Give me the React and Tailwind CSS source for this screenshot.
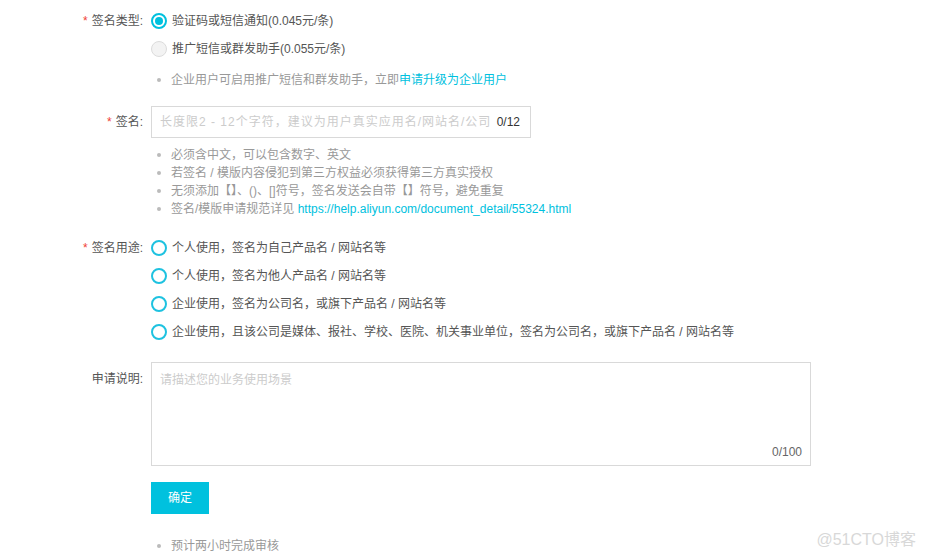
import React from 'react';

const font = { fontFamily: '"Liberation Sans", "Noto Sans CJK SC", sans-serif' };

const Radio = ({ state }) => {
  if (state === 'checked') {
    return (
      <span className="w-4 h-4 rounded-full border-2 border-[#00c1de] bg-white flex items-center justify-center shrink-0">
        <span className="w-2 h-2 rounded-full bg-[#00c1de]" />
      </span>
    );
  }
  if (state === 'disabled') {
    return <span className="w-4 h-4 rounded-full border border-[#dcdcdc] bg-[#f3f3f3] shrink-0" />;
  }
  return <span className="w-4 h-4 rounded-full border-2 border-[#1ec2e0] bg-white shrink-0" />;
};

const Label = ({ required, children, className = '' }) => (
  <div className={`w-[143px] shrink-0 text-right text-[#555] ${className}`}>
    {required && <span className="text-[#f04134] mr-1">*</span>}
    {children}
  </div>
);

const Bullet = ({ children }) => (
  <div className="flex items-center h-[18px] text-[#999]">
    <span className="w-[4px] h-[4px] rounded-full bg-[#bbb] ml-[6px] mr-[10px]" />
    <span>{children}</span>
  </div>
);

const RadioRow = ({ state, children }) => (
  <div className="flex items-center h-7 gap-[5px]">
    <Radio state={state} />
    <span className="text-[#555]">{children}</span>
  </div>
);

export default function App() {
  const usages = [
    '个人使用，签名为自己产品名 / 网站名等',
    '个人使用，签名为他人产品名 / 网站名等',
    '企业使用，签名为公司名，或旗下产品名 / 网站名等',
    '企业使用，且该公司是媒体、报社、学校、医院、机关事业单位，签名为公司名，或旗下产品名 / 网站名等',
  ];

  return (
    <div className="relative w-[926px] h-[559px] bg-white overflow-hidden text-[12px]" style={font}>
      <div className="pt-[7px]">
        {/* 签名类型 */}
        <div className="flex gap-2">
          <Label required className="leading-7">签名类型:</Label>
          <div>
            <RadioRow state="checked">验证码或短信通知(0.045元/条)</RadioRow>
            <RadioRow state="disabled">推广短信或群发助手(0.055元/条)</RadioRow>
            <div className="mt-2">
              <Bullet>
                企业用户可启用推广短信和群发助手，立即
                <span className="text-[#00c1de]">申请升级为企业用户</span>
              </Bullet>
            </div>
          </div>
        </div>

        {/* 签名 */}
        <div className="flex gap-2 mt-[17px]">
          <Label required className="leading-8">签名:</Label>
          <div>
            <div className="w-[380px] h-8 border border-[#d9d9d9] flex items-center pl-2 pr-[10px]">
              <span className="flex-1 text-[#ccc] tracking-[1px] whitespace-nowrap overflow-hidden">
                长度限2 - 12个字符，建议为用户真实应用名/网站名/公司名
              </span>
              <span className="text-[#333] ml-[6px]">0/12</span>
            </div>
            <div className="mt-2">
              <Bullet>必须含中文，可以包含数字、英文</Bullet>
              <Bullet>若签名 / 模版内容侵犯到第三方权益必须获得第三方真实授权</Bullet>
              <Bullet>无须添加【】、()、[]符号，签名发送会自带【】符号，避免重复</Bullet>
              <Bullet>
                签名/模版申请规范详见{' '}
                <span className="text-[#00c1de]">https://help.aliyun.com/document_detail/55324.html</span>
              </Bullet>
            </div>
          </div>
        </div>

        {/* 签名用途 */}
        <div className="flex gap-2 mt-4">
          <Label required className="leading-7">签名用途:</Label>
          <div>
            {usages.map((u) => (
              <RadioRow key={u}>{u}</RadioRow>
            ))}
          </div>
        </div>

        {/* 申请说明 */}
        <div className="flex gap-2 mt-4">
          <Label className="pt-2 leading-[18px]">申请说明:</Label>
          <div>
            <div className="relative w-[660px] h-[104px] border border-[#d9d9d9] pt-2 pl-2">
              <span className="text-[#ccc] leading-[18px]">请描述您的业务使用场景</span>
              <span className="absolute right-[8px] bottom-[4px] text-[#666]">0/100</span>
            </div>
            <button className="mt-4 w-[58px] h-8 bg-[#00c1de] text-white">确定</button>
            <div className="mt-[23px]">
              <Bullet>预计两小时完成审核</Bullet>
            </div>
          </div>
        </div>
      </div>

      <div className="absolute right-[10px] bottom-[7px] text-[16px] text-[#d8d8d8]">@51CTO博客</div>
    </div>
  );
}
